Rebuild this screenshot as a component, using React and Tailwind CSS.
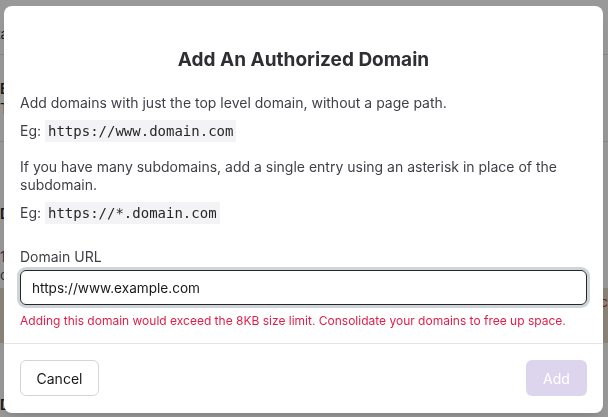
import React, { useState } from "react";

const AuthorizedDomainModal = () => {
  const [url, setUrl] = useState("https://www.example.com");

  return (
    <div className="fixed inset-0 bg-black/40 pl-[4px] pt-[6px]">
      <div className="w-[599px] h-[407px] bg-white rounded-[8px] shadow-lg flex flex-col text-[#3f3f46]">
        <div className="px-[16px] pt-[40px]">
          <h2 className="text-center text-[19px] leading-[28px] font-bold text-[#2f2f33]">
            Add An Authorized Domain
          </h2>

          <p className="mt-[19px] text-[14px] leading-[20px]">
            Add domains with just the top level domain, without a page path.
          </p>
          <p className="mt-[5px] text-[14px] leading-[25px]">
            Eg:{" "}
            <code className="bg-[#f3f3f5] px-[3px] py-[3px] font-['DejaVu_Sans_Mono',monospace] text-[14px] text-[#27272a]">
              https://www.domain.com
            </code>
          </p>

          <p className="mt-[14px] text-[14px] leading-[18px] pr-[20px]">
            If you have many subdomains, add a single entry using an asterisk in place of the subdomain.
          </p>
          <p className="mt-[6px] text-[14px] leading-[25px]">
            Eg:{" "}
            <code className="bg-[#f3f3f5] px-[3px] py-[3px] font-['DejaVu_Sans_Mono',monospace] text-[14px] text-[#27272a]">
              https://*.domain.com
            </code>
          </p>

          <label className="block mt-[21px] text-[14px] leading-[20px] text-[#3f3f46]">
            Domain URL
          </label>
          <input
            value={url}
            onChange={(e) => setUrl(e.target.value)}
            className="mt-[3px] block w-[567px] h-[35px] px-[11px] rounded-[6px] border border-[#27272a] ring-[3px] ring-[#cfd3da] outline-none text-[13.6px] text-[#18181b] caret-black"
          />
          <p className="mt-[8px] text-[12px] leading-[16px] text-[#e11d48] whitespace-nowrap">
            Adding this domain would exceed the 8KB size limit. Consolidate your domains to free up space.
          </p>
        </div>

        <div className="mt-[14px] border-t border-[#e4e4e7] px-[16px] pt-[16px] flex justify-between">
          <button className="h-[36px] w-[79px] rounded-[6px] border border-[#d4d4d8] bg-white text-[14px] text-[#18181b]">
            Cancel
          </button>
          <button
            disabled
            className="h-[36px] w-[61px] rounded-[6px] bg-[#ddd5ee] text-[14px] text-white"
          >
            Add
          </button>
        </div>
      </div>
    </div>
  );
};

const BackgroundPage = () => (
  <div className="h-[417px] bg-white text-[#27272a] text-[14px] overflow-hidden">
    <div className="h-[24px]" />
    <p className="leading-[20px] -ml-[22px]">Data</p>
    <div className="mt-[10px] border-t border-[#e4e4e7]" />
    <p className="mt-[24px] leading-[20px] font-semibold">Edit settings</p>
    <p className="leading-[20px]">Tokens</p>
    <div className="mt-[22px] border-t border-[#e4e4e7]" />
    <p className="mt-[62px] leading-[20px] font-semibold">Domains</p>
    <p className="mt-[24px] leading-[18px] text-[#52525b]">1 authorized</p>
    <p className="leading-[18px] text-[#52525b]">domains are listed here</p>
    <div className="mt-[4px] h-[55px] bg-[#e8dcc8] text-[#c2410c] flex justify-end leading-[20px]">
      <span className="mt-[4px]">c</span>
    </div>
    <div className="h-[52px]" />
    <p className="leading-[20px] font-semibold">Domain</p>
  </div>
);

export default function App() {
  return (
    <div className="relative w-[608px] h-[417px] overflow-hidden font-['Inter',sans-serif]">
      <BackgroundPage />
      <AuthorizedDomainModal />
    </div>
  );
}
